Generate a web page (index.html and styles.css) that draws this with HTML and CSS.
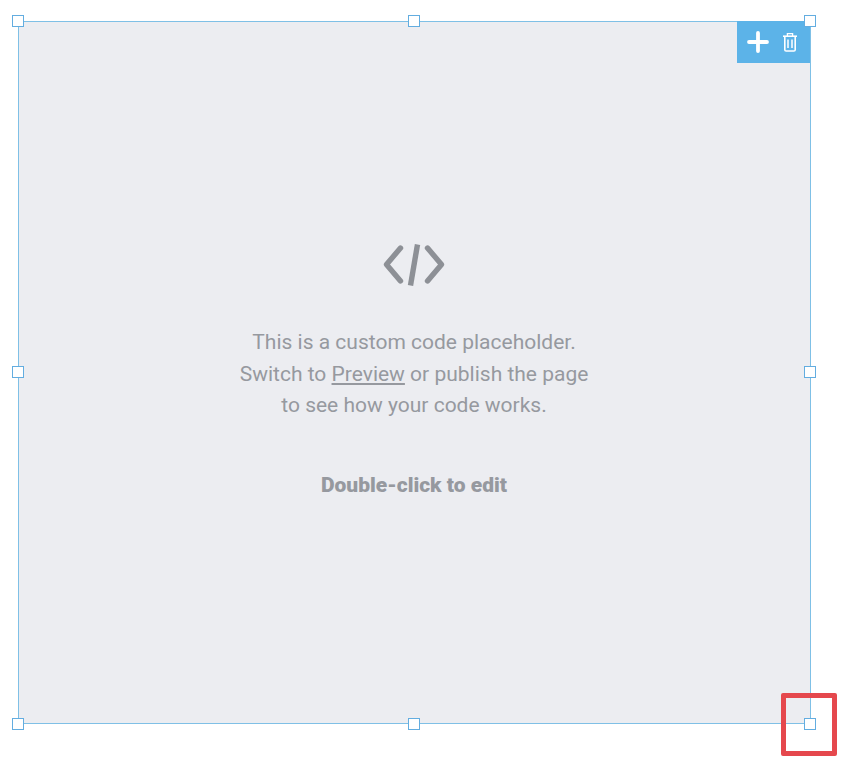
FILE: index.html
```html
<!DOCTYPE html>
<html lang="en">
<head>
  <meta charset="UTF-8">
  <title>Custom code placeholder</title>
  <link rel="stylesheet" href="styles.css">
</head>
<body>

  <div class="frame">
    <div class="toolbar">
      <svg class="icon-plus" width="22" height="22" viewBox="0 0 22 22">
        <path d="M11 2v18M2 11h18" stroke="#fff" stroke-width="3.8" stroke-linecap="round"/>
      </svg>
      <svg class="icon-trash" width="16" height="20" viewBox="0 0 16 20" fill="none" stroke="#fff">
        <path d="M1 4.200h14" stroke-width="1.6"/>
        <path d="M5.400 4V1.600h5.200V4" stroke-width="1.3"/>
        <path d="M2.800 4.500v13.200c0 .8.500 1.300 1.300 1.300h7.800c.8 0 1.300-.5 1.300-1.300V4.500" stroke-width="1.6"/>
        <path d="M6 7.500v8.500M10 7.500v8.500" stroke-width="1.5"/>
      </svg>
    </div>

    <div class="placeholder">
      <svg class="icon-code" width="64" height="44" viewBox="0 0 64 44" fill="none" stroke="#8d9096" stroke-width="5.4" stroke-linecap="round" stroke-linejoin="round">
        <path d="M18.500 5L4.500 21.500L18.500 38"/>
        <path d="M45.500 5L59.500 21.500L45.500 38"/>
        <path d="M35.500 1.500L28.500 42.500" stroke-linecap="butt"/>
      </svg>
      <p class="message">This is a custom code placeholder.<br>Switch to <u>Preview</u> or publish the page<br>to see how your code works.</p>
      <p class="hint">Double-click to edit</p>
    </div>

    <span class="handle top-left"></span>
    <span class="handle top-mid"></span>
    <span class="handle top-right"></span>
    <span class="handle mid-left"></span>
    <span class="handle mid-right"></span>
    <span class="handle bottom-left"></span>
    <span class="handle bottom-mid"></span>
    <span class="handle bottom-right"></span>
  </div>

  <div class="highlight"></div>

</body>
</html>
```

FILE: styles.css
```css
html, body {
  margin: 0;
  padding: 0;
  background-color: #fff;
}

body {
  position: relative;
  width: 852px;
  height: 776px;
  padding-top: 21px;
  padding-left: 18px;
  box-sizing: border-box;
  overflow: hidden;
  font-family: Roboto, "Liberation Sans", sans-serif;
}

.frame {
  position: relative;
  box-sizing: border-box;
  width: 793px;
  height: 703px;
  background-color: #ecedf1;
  border: 1px solid #7fc0e6;
}

.toolbar {
  position: absolute;
  top: -1px;
  right: 0;
  width: 73px;
  height: 42px;
  background-color: #5cb3e8;
  display: flex;
  align-items: center;
  padding-left: 10px;
  box-sizing: border-box;
  gap: 13px;
}

.placeholder {
  display: flex;
  flex-direction: column;
  align-items: center;
  padding-top: 221px;
  padding-right: 1px;
  text-align: center;
  color: #96999f;
}

.icon-code {
  display: block;
}

.message {
  margin: 40px 0 0;
  font-size: 21px;
  line-height: 31.500px;
}

.hint {
  margin: 49px 0 0;
  font-size: 21px;
  line-height: 28px;
  font-weight: 900;
}

.handle {
  position: absolute;
  box-sizing: border-box;
  width: 12px;
  height: 12px;
  background-color: #fff;
  border: 1px solid #63ade0;
}

.top-left { top: -7px; left: -7px; }
.top-mid { top: -7px; left: 389px; }
.top-right { top: -7px; right: -6px; }
.mid-left { top: 344px; left: -7px; }
.mid-right { top: 344px; right: -6px; }
.bottom-left { bottom: -7px; left: -7px; }
.bottom-mid { bottom: -7px; left: 389px; }
.bottom-right { bottom: -7px; right: -6px; }

.highlight {
  position: absolute;
  top: 693px;
  left: 781px;
  width: 56px;
  height: 63px;
  box-sizing: border-box;
  border: 5px solid #e5484d;
  border-radius: 2px;
}
```
